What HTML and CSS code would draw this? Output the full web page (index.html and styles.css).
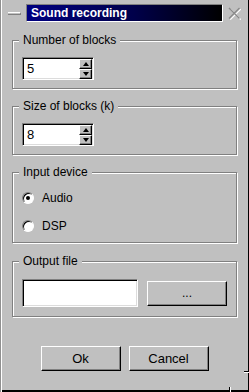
FILE: index.html
```html
<!DOCTYPE html>
<html>
  <head>
    <title>Sound recording</title>
    <link rel="stylesheet" href="styles.css">
  </head>
  <body>
    <div class="window">
      <div class="titlebar">
        <span class="minimize"></span>
        <div class="caption">Sound recording</div>
        <svg class="close" width="13" height="13" viewBox="0 0 13 13">
          <path d="M1.5 1.5 L12 12 M12 1.5 L1.5 12" stroke="#ffffff" stroke-width="1.2" fill="none" transform="translate(0.8 0.6)"/>
          <path d="M1 1 L11.5 11.5 M11.5 1 L1 11.5" stroke="#8a8a8a" stroke-width="1.4" fill="none"/>
        </svg>
      </div>

      <fieldset class="group">
        <legend>Number of blocks</legend>
        <div class="spinbox">
          <span class="spin-value">5</span>
          <div class="spin-buttons">
            <span class="spin-btn"><span class="arrow-up"></span></span>
            <span class="spin-btn"><span class="arrow-down"></span></span>
          </div>
        </div>
      </fieldset>

      <fieldset class="group">
        <legend>Size of blocks (k)</legend>
        <div class="spinbox">
          <span class="spin-value">8</span>
          <div class="spin-buttons">
            <span class="spin-btn"><span class="arrow-up"></span></span>
            <span class="spin-btn"><span class="arrow-down"></span></span>
          </div>
        </div>
      </fieldset>

      <fieldset class="group group-radio">
        <legend>Input device</legend>
        <label class="radio-row"><span class="radio checked"></span>Audio</label>
        <label class="radio-row"><span class="radio"></span>DSP</label>
      </fieldset>

      <fieldset class="group group-file">
        <legend>Output file</legend>
        <div class="file-row">
          <div class="textfield"></div>
          <button class="btn btn-browse">...</button>
        </div>
      </fieldset>

      <div class="actions">
        <button class="btn">Ok</button>
        <button class="btn">Cancel</button>
      </div>

      <span class="grip-v"></span>
      <span class="grip-h"></span>
    </div>
  </body>
</html>
```

FILE: styles.css
```css
body {
  margin: 0;
  font-family: "Liberation Sans", Arial, sans-serif;
  font-size: 12px;
  color: #000;
}
.window {
  position: relative;
  width: 249px;
  height: 392px;
  box-sizing: border-box;
  padding: 0 1px;
  background-color: #c0c0c0;
  box-shadow: inset 1px 0 0 #909090, inset 2px 0 0 #ffffff, inset -1px 0 0 #000, inset 0 -2px 0 #000;
  overflow: hidden;
}
.titlebar {
  display: flex;
  align-items: center;
  height: 18px;
  padding: 4px 0 0 7px;
}
.minimize {
  width: 12px;
  height: 1px;
  border-top: 1px solid #fff;
  border-bottom: 1px solid #808080;
  border-right: 1px solid #808080;
  box-sizing: content-box;
  margin-top: 1px;
}
.caption {
  margin-left: 5px;
  width: 191px;
  height: 16px;
  line-height: 16px;
  padding-left: 4px;
  border: 1px solid;
  border-color: #808080 #fff #fff #808080;
  background: linear-gradient(to right, #000080, #00004a 55%, #000 100%);
  color: #fff;
  font-weight: bold;
  font-size: 12px;
  box-sizing: content-box;
}
.close {
  margin-left: 5px;
  margin-top: 1px;
}

/* group boxes */
.group {
  margin: 11px 11px 0 11px;
  padding: 9px 9px 8px 9px;
  border: 1px solid #808080;
  box-shadow: inset 1px 1px 0 #fff, 1px 1px 0 #fff;
  min-width: 0;
}
.group + .group {
  margin-top: 10px;
}
.group legend {
  margin-left: -3px;
  padding: 0 4px;
  line-height: 15px;
  background-color: #c0c0c0;
}
.group-radio {
  padding-top: 4px;
  padding-bottom: 2px;
}
.group-file {
  margin-top: 11px !important;
  padding-top: 10px;
  padding-bottom: 9px;
}

/* spin box */
.spinbox {
  display: flex;
  width: 70px;
  height: 20px;
  padding-top: 1px;
  border: 1px solid;
  border-color: #808080 #fff #fff #808080;
  box-shadow: inset 1px 1px 0 #000, inset -1px -1px 0 #dcdcdc;
  background-color: #fff;
}
.spin-value {
  flex: 1;
  padding-left: 4px;
  font-size: 13px;
  line-height: 20px;
}
.spin-buttons {
  display: flex;
  flex-direction: column;
  width: 13px;
  margin-right: 1px;
}
.spin-btn {
  display: flex;
  align-items: center;
  justify-content: center;
  height: 8px;
  border: 1px solid;
  border-color: #fff #000 #000 #fff;
  box-shadow: inset -1px -1px 0 #808080;
  background-color: #c0c0c0;
}
.arrow-up {
  width: 0;
  height: 0;
  border-left: 3px solid transparent;
  border-right: 3px solid transparent;
  border-bottom: 4px solid #000;
}
.arrow-down {
  width: 0;
  height: 0;
  border-left: 3px solid transparent;
  border-right: 3px solid transparent;
  border-top: 4px solid #000;
}

/* radios */
.radio-row {
  display: flex;
  align-items: center;
  gap: 8px;
  height: 28px;
  font-size: 12px;
}
.radio {
  position: relative;
  width: 10px;
  height: 10px;
  border: 1px solid;
  border-color: #808080 #fff #fff #808080;
  border-radius: 50%;
  box-shadow: inset 1px 1px 0 #000;
  background-color: #fff;
}
.radio.checked::after {
  content: "";
  position: absolute;
  left: 3px;
  top: 3px;
  width: 4px;
  height: 4px;
  border-radius: 50%;
  background-color: #000;
}

/* output file */
.file-row {
  display: flex;
  align-items: center;
  gap: 9px;
}
.textfield {
  width: 114px;
  height: 26px;
  border: 1px solid;
  border-color: #808080 #fff #fff #808080;
  box-shadow: inset 1px 1px 0 #000, inset -1px -1px 0 #dcdcdc;
  background-color: #fff;
}

/* buttons */
.btn {
  width: 80px;
  height: 25px;
  padding: 0;
  border: 1px solid;
  border-color: #fff #000 #000 #fff;
  box-shadow: inset -1px -1px 0 #808080;
  background-color: #c0c0c0;
  font-family: "Liberation Sans", Arial, sans-serif;
  font-size: 13px;
  color: #000;
}
.btn-browse {
  font-size: 12px;
}
.actions {
  display: flex;
  justify-content: center;
  gap: 8px;
  margin-top: 29px;
}

/* resize grip in the corner */
.grip-v {
  position: absolute;
  left: 229px;
  top: 387px;
  width: 1px;
  height: 5px;
  background-color: #000;
  box-shadow: 1px 0 0 #fff;
}
.grip-h {
  position: absolute;
  left: 244px;
  top: 371px;
  width: 5px;
  height: 1px;
  background-color: #000;
  box-shadow: 0 1px 0 #fff;
}
```
